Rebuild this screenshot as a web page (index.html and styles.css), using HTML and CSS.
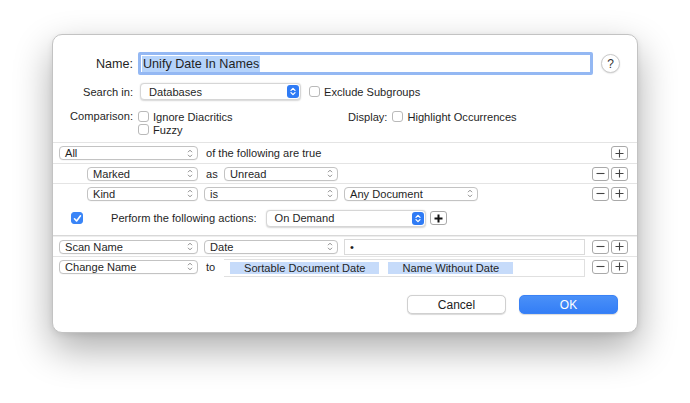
FILE: index.html
```html
<!DOCTYPE html>
<html>
<head>
  <title>Smart Rule</title>
  <link rel="stylesheet" href="styles.css">
</head>
<body>
  <div class="dialog">
    <div class="row name-row">
      <span class="label">Name:</span>
      <div class="name-field"><span class="selected">Unify Date In Names</span></div>
      <div class="help">?</div>
    </div>

    <div class="row search-row">
      <span class="label">Search in:</span>
      <div class="popup popup-lg w-db">
        <span>Databases</span>
        <span class="stepper"><svg width="6" height="9" viewBox="0 0 6 9"><path d="M1 3.4 3 1.4 5 3.4M1 5.6 3 7.6 5 5.6" fill="none" stroke="#fff" stroke-width="1.3" stroke-linecap="round" stroke-linejoin="round"/></svg></span>
      </div>
      <span class="check gap-check"></span>
      <span class="check-text">Exclude Subgroups</span>
    </div>

    <div class="row options-row">
      <div class="opt-left">
        <span class="label">Comparison:</span>
        <div class="checks">
          <div class="check-line"><span class="check"></span><span class="check-text">Ignore Diacritics</span></div>
          <div class="check-line"><span class="check"></span><span class="check-text">Fuzzy</span></div>
        </div>
      </div>
      <div class="opt-right">
        <span>Display:</span>
        <span class="check"></span>
        <span class="check-text">Highlight Occurrences</span>
      </div>
    </div>

    <div class="list">
      <div class="list-row">
        <div class="popup w-field"><span>All</span><svg width="6" height="9" viewBox="0 0 6 9"><path d="M1 3.2 3 1.2 5 3.2M1 5.8 3 7.8 5 5.8" fill="none" stroke="#8c8c8c" stroke-width="1"/></svg></div>
        <span class="word">of the following are true</span>
        <div class="tools">
          <div class="sq"><svg width="9" height="9" viewBox="0 0 9 9"><path d="M0.5 4.5h8M4.5 0.5v8" stroke="#444" stroke-width="1.1"/></svg></div>
        </div>
      </div>
      <div class="list-row indent">
        <div class="popup w-sub"><span>Marked</span><svg width="6" height="9" viewBox="0 0 6 9"><path d="M1 3.2 3 1.2 5 3.2M1 5.8 3 7.8 5 5.8" fill="none" stroke="#8c8c8c" stroke-width="1"/></svg></div>
        <span class="word narrow">as</span>
        <div class="popup w-val"><span>Unread</span><svg width="6" height="9" viewBox="0 0 6 9"><path d="M1 3.2 3 1.2 5 3.2M1 5.8 3 7.8 5 5.8" fill="none" stroke="#8c8c8c" stroke-width="1"/></svg></div>
        <div class="tools">
          <div class="sq"><svg width="9" height="9" viewBox="0 0 9 9"><path d="M0.5 4.5h8" stroke="#444" stroke-width="1.1"/></svg></div>
          <div class="sq"><svg width="9" height="9" viewBox="0 0 9 9"><path d="M0.5 4.5h8M4.5 0.5v8" stroke="#444" stroke-width="1.1"/></svg></div>
        </div>
      </div>
      <div class="list-row indent">
        <div class="popup w-sub"><span>Kind</span><svg width="6" height="9" viewBox="0 0 6 9"><path d="M1 3.2 3 1.2 5 3.2M1 5.8 3 7.8 5 5.8" fill="none" stroke="#8c8c8c" stroke-width="1"/></svg></div>
        <div class="popup w-op"><span>is</span><svg width="6" height="9" viewBox="0 0 6 9"><path d="M1 3.2 3 1.2 5 3.2M1 5.8 3 7.8 5 5.8" fill="none" stroke="#8c8c8c" stroke-width="1"/></svg></div>
        <div class="popup w-op"><span>Any Document</span><svg width="6" height="9" viewBox="0 0 6 9"><path d="M1 3.2 3 1.2 5 3.2M1 5.8 3 7.8 5 5.8" fill="none" stroke="#8c8c8c" stroke-width="1"/></svg></div>
        <div class="tools">
          <div class="sq"><svg width="9" height="9" viewBox="0 0 9 9"><path d="M0.5 4.5h8" stroke="#444" stroke-width="1.1"/></svg></div>
          <div class="sq"><svg width="9" height="9" viewBox="0 0 9 9"><path d="M0.5 4.5h8M4.5 0.5v8" stroke="#444" stroke-width="1.1"/></svg></div>
        </div>
      </div>
    </div>

    <div class="row actions-row">
      <span class="check on"><svg width="9" height="9" viewBox="0 0 9 9"><path d="M1.5 4.8 3.6 7 7.5 1.8" fill="none" stroke="#fff" stroke-width="1.6" stroke-linecap="round" stroke-linejoin="round"/></svg></span>
      <span class="actions-text">Perform the following actions:</span>
      <div class="popup popup-lg w-when">
        <span>On Demand</span>
        <span class="stepper"><svg width="6" height="9" viewBox="0 0 6 9"><path d="M1 3.4 3 1.4 5 3.4M1 5.6 3 7.6 5 5.6" fill="none" stroke="#fff" stroke-width="1.3" stroke-linecap="round" stroke-linejoin="round"/></svg></span>
      </div>
      <div class="sq sq-bold"><svg width="9" height="9" viewBox="0 0 9 9"><path d="M0.5 4.5h8M4.5 0.5v8" stroke="#111" stroke-width="2"/></svg></div>
    </div>

    <div class="list actions-list">
      <div class="list-row">
        <div class="popup w-field"><span>Scan Name</span><svg width="6" height="9" viewBox="0 0 6 9"><path d="M1 3.2 3 1.2 5 3.2M1 5.8 3 7.8 5 5.8" fill="none" stroke="#8c8c8c" stroke-width="1"/></svg></div>
        <div class="popup w-op"><span>Date</span><svg width="6" height="9" viewBox="0 0 6 9"><path d="M1 3.2 3 1.2 5 3.2M1 5.8 3 7.8 5 5.8" fill="none" stroke="#8c8c8c" stroke-width="1"/></svg></div>
        <div class="text-field">•</div>
        <div class="tools">
          <div class="sq"><svg width="9" height="9" viewBox="0 0 9 9"><path d="M0.5 4.5h8" stroke="#444" stroke-width="1.1"/></svg></div>
          <div class="sq"><svg width="9" height="9" viewBox="0 0 9 9"><path d="M0.5 4.5h8M4.5 0.5v8" stroke="#444" stroke-width="1.1"/></svg></div>
        </div>
      </div>
      <div class="list-row">
        <div class="popup w-field"><span>Change Name</span><svg width="6" height="9" viewBox="0 0 6 9"><path d="M1 3.2 3 1.2 5 3.2M1 5.8 3 7.8 5 5.8" fill="none" stroke="#8c8c8c" stroke-width="1"/></svg></div>
        <span class="word narrow">to</span>
        <div class="tokens">
          <span class="token">Sortable Document Date</span>
          <span class="token">Name Without Date</span>
        </div>
        <div class="tools">
          <div class="sq"><svg width="9" height="9" viewBox="0 0 9 9"><path d="M0.5 4.5h8" stroke="#444" stroke-width="1.1"/></svg></div>
          <div class="sq"><svg width="9" height="9" viewBox="0 0 9 9"><path d="M0.5 4.5h8M4.5 0.5v8" stroke="#444" stroke-width="1.1"/></svg></div>
        </div>
      </div>
    </div>

    <div class="footer">
      <button class="btn">Cancel</button>
      <button class="btn btn-ok">OK</button>
    </div>
  </div>
</body>
</html>
```

FILE: styles.css
```css
* {
  box-sizing: border-box;
}
html,
body {
  margin: 0;
  background: #fff;
}
body {
  min-height: 100vh;
  padding: 34px 0 0 52px;
  font-family: "Liberation Sans", Arial, sans-serif;
  font-size: 11.1px;
  color: #1f1f1f;
}
.dialog {
  width: 586px;
  height: 299px;
  border: 1px solid #c3c3c3;
  border-radius: 10px;
  background: #fff;
  box-shadow: 0 16px 38px rgba(0, 0, 0, 0.33), 0 2px 6px rgba(0, 0, 0, 0.08);
  padding-top: 17px;
  display: flex;
  flex-direction: column;
}
.row {
  display: flex;
  align-items: center;
}
.label {
  width: 80px;
  flex: none;
  text-align: right;
}

/* name */
.name-row {
  height: 23px;
}
.name-row .label {
  font-size: 12.6px;
}
.name-field {
  margin-left: 5px;
  width: 455px;
  height: 23px;
  border: 3px solid #94b8f3;
  border-radius: 2px;
  display: flex;
  align-items: center;
  padding-left: 1px;
  font-size: 12.6px;
}
.selected {
  background: #b5d3fb;
  line-height: 16px;
  padding: 0 1px;
}
.help {
  margin-left: 8px;
  width: 19px;
  height: 19px;
  border-radius: 50%;
  border: 1px solid #cbcbcb;
  background: #fff;
  box-shadow: 0 0.5px 1.5px rgba(0, 0, 0, 0.15);
  font-size: 12px;
  color: #333;
  display: flex;
  align-items: center;
  justify-content: center;
}

/* search + options */
.search-row {
  margin-top: 8px;
  height: 17px;
}
.search-row .popup {
  margin-left: 7px;
}
.gap-check {
  margin-left: 8px;
}
.check {
  width: 11px;
  height: 11px;
  flex: none;
  border: 1px solid #b9b9b9;
  border-radius: 3px;
  background: #fff;
  display: flex;
  align-items: center;
  justify-content: center;
}
.check.on {
  width: 12px;
  height: 12px;
  background: #3a85f7;
  border-color: #3a85f7;
}
.check-text {
  margin-left: 4px;
}
.options-row {
  margin-top: 10px;
  align-items: flex-start;
}
.opt-left {
  width: 295px;
  display: flex;
  align-items: flex-start;
}
.opt-left .label {
  line-height: 13px;
}
.checks {
  margin-left: 5px;
}
.check-line {
  height: 13px;
  display: flex;
  align-items: center;
}
.opt-right {
  height: 13px;
  display: flex;
  align-items: center;
}
.opt-right .check {
  margin-left: 5px;
}

/* rule lists */
.list {
  margin-top: 6px;
  border-top: 1px solid #e4e4e4;
}
.list-row {
  height: 20px;
  display: flex;
  align-items: center;
  gap: 6px;
  padding: 0 9px 0 6px;
}
.list-row + .list-row {
  border-top: 1px solid #e4e4e4;
}
.list-row.indent {
  padding-left: 34px;
}
.word {
  padding-left: 2px;
}
.word.narrow {
  width: 14px;
}
.tools {
  margin-left: auto;
  display: flex;
  gap: 2px;
}
.sq {
  width: 17px;
  height: 14px;
  flex: none;
  border: 1px solid #a9a9a9;
  border-radius: 3px;
  background: #fff;
  display: flex;
  align-items: center;
  justify-content: center;
}
.popup {
  height: 14px;
  flex: none;
  display: flex;
  align-items: center;
  justify-content: space-between;
  border: 1px solid #c3c3c3;
  border-radius: 4px;
  background: #fff;
  padding: 0 4px 0 5px;
  box-shadow: 0 0.5px 0.5px rgba(0, 0, 0, 0.06);
}
.popup-lg {
  height: 17px;
  padding: 0 1px 0 8px;
  border-color: #d6d6d6;
  box-shadow: 0 0.5px 1.5px rgba(0, 0, 0, 0.16);
}
.stepper {
  width: 12px;
  height: 13px;
  border-radius: 3px;
  background: #2f7bf5;
  display: flex;
  align-items: center;
  justify-content: center;
}
.w-db {
  width: 161px;
}
.w-field {
  width: 139px;
}
.w-sub {
  width: 111px;
}
.w-val {
  width: 114px;
}
.w-op {
  width: 134px;
}
.w-when {
  width: 160px;
}

/* actions */
.actions-row {
  height: 32px;
  padding: 0 0 2px 18px;
}
.actions-text {
  margin-left: 28px;
}
.actions-row .popup {
  margin-left: 9px;
}
.sq-bold {
  margin-left: 4px;
  height: 14px;
}
.actions-list {
  margin-top: 0;
  border-top: 1px solid #d8d8d8;
}
.actions-list .list-row:first-child {
  border-top: 1px solid #eeeeee;
}
.text-field {
  width: 241px;
  height: 16px;
  border: 1px solid #dadada;
  padding-left: 5px;
  line-height: 14px;
}
.tokens {
  width: 361px;
  height: 18px;
  margin-top: 2px;
  border: 1px solid #e0e0e0;
  border-left: none;
  display: flex;
  align-items: center;
  gap: 9px;
  padding-left: 6px;
}
.token {
  background: #c6dbfa;
  height: 12px;
  line-height: 12px;
  padding: 0 14px;
}

/* buttons */
.footer {
  margin-top: 19px;
  display: flex;
  justify-content: flex-end;
  gap: 13px;
  padding-right: 19px;
}
.btn {
  width: 99px;
  height: 19px;
  border: 1px solid #d0d0d0;
  border-radius: 5px;
  background: #fff;
  box-shadow: 0 0.5px 1px rgba(0, 0, 0, 0.15);
  font-family: "Liberation Sans", Arial, sans-serif;
  font-size: 12px;
  color: #222;
  padding: 0;
}
.btn-ok {
  border-color: #3a82f6;
  background: linear-gradient(#4a90f8, #347ef6);
  color: #fff;
}
```
